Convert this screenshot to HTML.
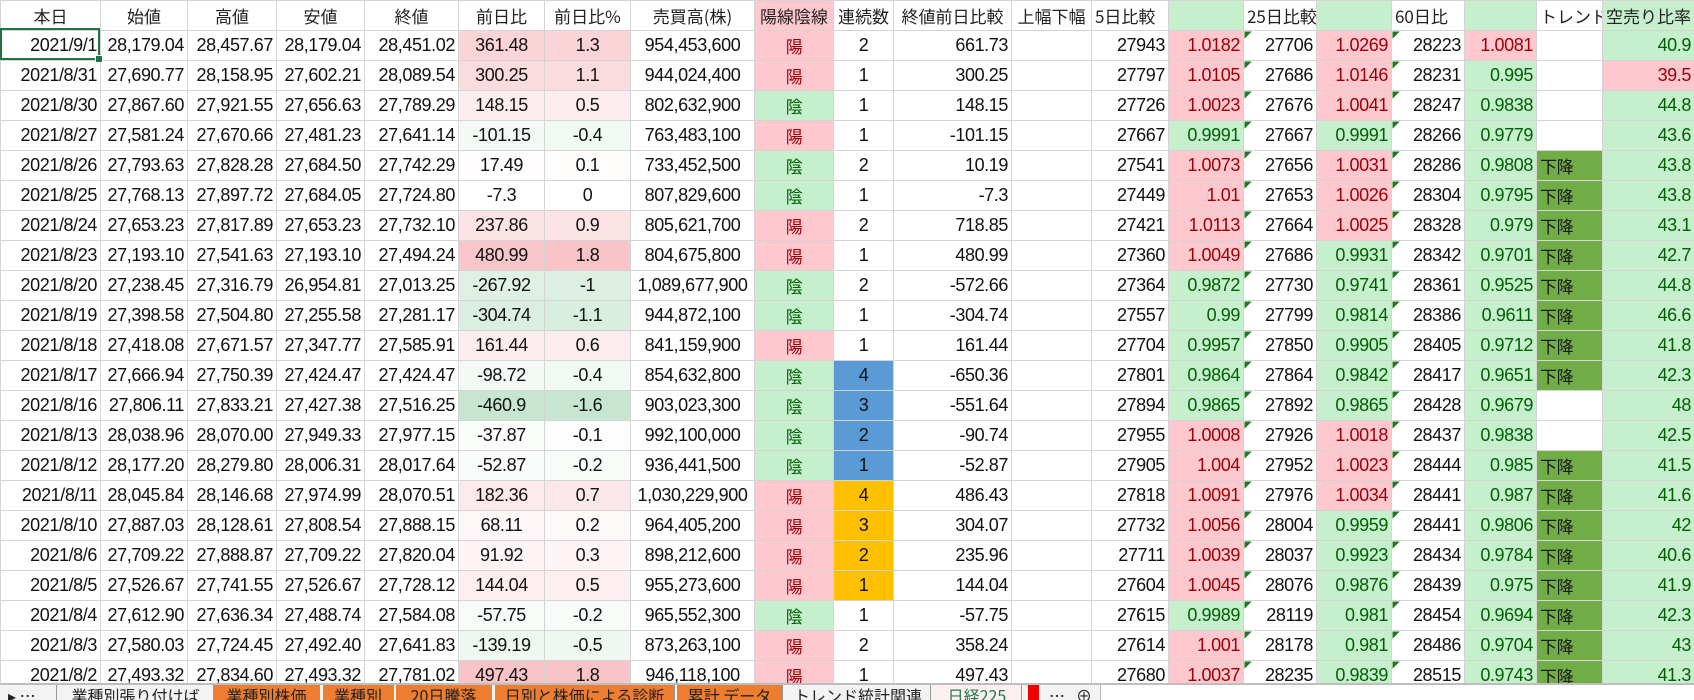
<!DOCTYPE html>
<html><head><meta charset="utf-8">
<style>
body{margin:0;width:1694px;height:698px;overflow:hidden;background:#fff;font-family:"Liberation Sans","Noto Sans CJK JP",sans-serif;position:relative}
table{border-collapse:collapse;table-layout:fixed;position:absolute;left:0;top:0;width:1694px}
td{border:1px solid #d4d4d4;padding:0 3px;font-size:18px;letter-spacing:-0.4px;color:#111;text-align:right;white-space:nowrap;overflow:hidden;height:29px;line-height:29px;box-sizing:border-box}
tr.h td{height:29px;font-family:"Noto Sans CJK JP",sans-serif;font-size:17px;letter-spacing:0;text-align:center;color:#222}
tr.h td.l{text-align:left}
td.c{text-align:center}
.j{font-family:"Noto Sans CJK JP",sans-serif;font-size:17px}
.p{background:#ffc7ce;color:#9c0006}
.g{background:#c6efce;color:#006100}
.b{background:#5b9bd5;text-align:center}
.o{background:#ffc000;text-align:center}
.t{background:#70ad47;text-align:left;font-family:"Noto Sans CJK JP",sans-serif;font-size:17px;color:#1a1a1a}
.tr{background:linear-gradient(135deg,#1e7b1e 0,#1e7b1e 5px,transparent 5px)}
#sel{position:absolute;left:0;top:28px;width:96px;height:28px;border:2px solid #217346}
#sel:after{content:"";position:absolute;right:-5px;bottom:-5px;width:6px;height:6px;background:#217346;border:1px solid #fff}
#tabs{position:absolute;left:0;top:683px;width:1694px;height:15px;background:#f3f3f3;border-top:2px solid #bdbdbd;overflow:hidden;font-family:"Noto Sans CJK JP",sans-serif;font-size:16px;line-height:20px;color:#222}
#tabs div{position:absolute;top:0;height:15px;padding-top:0;text-align:center;overflow:hidden;border-right:1px solid #999}
.or{background:#ed7d31}
</style></head><body>
<table>
<colgroup>
<col style="width:100px"><col style="width:87px"><col style="width:89px"><col style="width:88px"><col style="width:94px"><col style="width:86px"><col style="width:86px"><col style="width:124px"><col style="width:79px"><col style="width:60px"><col style="width:118px"><col style="width:80px"><col style="width:77px"><col style="width:75px"><col style="width:73px"><col style="width:75px"><col style="width:73px"><col style="width:72px"><col style="width:66px"><col style="width:92px">
</colgroup>
<tr class="h"><td>本日</td><td>始値</td><td>高値</td><td>安値</td><td>終値</td><td>前日比</td><td>前日比%</td><td>売買高(株)</td><td class="p">陽線陰線</td><td>連続数</td><td>終値前日比較</td><td>上幅下幅</td><td class="l">5日比較</td><td class="g"></td><td class="l">25日比較</td><td class="g"></td><td class="l">60日比</td><td class="g"></td><td class="l">トレンド</td><td class="l g">空売り比率</td></tr>
<tr><td>2021/9/1</td><td>28,179.04</td><td>28,457.67</td><td>28,179.04</td><td>28,451.02</td><td class="c" style="background:rgb(250,212,215)">361.48</td><td class="c" style="background:rgb(250,212,215)">1.3</td><td class="c">954,453,600</td><td class="c j p">陽</td><td class="c">2</td><td>661.73</td><td></td><td>27943</td><td class="p">1.0182</td><td class="tr">27706</td><td class="p">1.0269</td><td class="tr">28223</td><td class="p">1.0081</td><td></td><td class="g">40.9</td></tr>
<tr><td>2021/8/31</td><td>27,690.77</td><td>28,158.95</td><td>27,602.21</td><td>28,089.54</td><td class="c" style="background:rgb(251,220,222)">300.25</td><td class="c" style="background:rgb(251,220,222)">1.1</td><td class="c">944,024,400</td><td class="c j p">陽</td><td class="c">1</td><td>300.25</td><td></td><td>27797</td><td class="p">1.0105</td><td class="tr">27686</td><td class="p">1.0146</td><td class="tr">28231</td><td class="g">0.995</td><td></td><td class="p">39.5</td></tr>
<tr><td>2021/8/30</td><td>27,867.60</td><td>27,921.55</td><td>27,656.63</td><td>27,789.29</td><td class="c" style="background:rgb(253,237,238)">148.15</td><td class="c" style="background:rgb(253,237,238)">0.5</td><td class="c">802,632,900</td><td class="c j g">陰</td><td class="c">1</td><td>148.15</td><td></td><td>27726</td><td class="p">1.0023</td><td class="tr">27676</td><td class="p">1.0041</td><td class="tr">28247</td><td class="g">0.9838</td><td></td><td class="g">44.8</td></tr>
<tr><td>2021/8/27</td><td>27,581.24</td><td>27,670.66</td><td>27,481.23</td><td>27,641.14</td><td class="c" style="background:rgb(243,250,245)">-101.15</td><td class="c" style="background:rgb(241,249,243)">-0.4</td><td class="c">763,483,100</td><td class="c j p">陽</td><td class="c">1</td><td>-101.15</td><td></td><td>27667</td><td class="g">0.9991</td><td class="tr">27667</td><td class="g">0.9991</td><td class="tr">28266</td><td class="g">0.9779</td><td></td><td class="g">43.6</td></tr>
<tr><td>2021/8/26</td><td>27,793.63</td><td>27,828.28</td><td>27,684.50</td><td>27,742.29</td><td class="c" style="background:rgb(255,253,253)">17.49</td><td class="c" style="background:rgb(255,252,252)">0.1</td><td class="c">733,452,500</td><td class="c j g">陰</td><td class="c">2</td><td>10.19</td><td></td><td>27541</td><td class="p">1.0073</td><td class="tr">27656</td><td class="p">1.0031</td><td class="tr">28286</td><td class="g">0.9808</td><td class="t">下降</td><td class="g">43.8</td></tr>
<tr><td>2021/8/25</td><td>27,768.13</td><td>27,897.72</td><td>27,684.05</td><td>27,724.80</td><td class="c" style="background:rgb(254,255,254)">-7.3</td><td class="c">0</td><td class="c">807,829,600</td><td class="c j g">陰</td><td class="c">1</td><td>-7.3</td><td></td><td>27449</td><td class="p">1.01</td><td class="tr">27653</td><td class="p">1.0026</td><td class="tr">28304</td><td class="g">0.9795</td><td class="t">下降</td><td class="g">43.8</td></tr>
<tr><td>2021/8/24</td><td>27,653.23</td><td>27,817.89</td><td>27,653.23</td><td>27,732.10</td><td class="c" style="background:rgb(252,227,229)">237.86</td><td class="c" style="background:rgb(252,227,229)">0.9</td><td class="c">805,621,700</td><td class="c j p">陽</td><td class="c">2</td><td>718.85</td><td></td><td>27421</td><td class="p">1.0113</td><td class="tr">27664</td><td class="p">1.0025</td><td class="tr">28328</td><td class="g">0.979</td><td class="t">下降</td><td class="g">43.1</td></tr>
<tr><td>2021/8/23</td><td>27,193.10</td><td>27,541.63</td><td>27,193.10</td><td>27,494.24</td><td class="c" style="background:rgb(248,198,202)">480.99</td><td class="c" style="background:rgb(248,196,200)">1.8</td><td class="c">804,675,800</td><td class="c j p">陽</td><td class="c">1</td><td>480.99</td><td></td><td>27360</td><td class="p">1.0049</td><td class="tr">27686</td><td class="g">0.9931</td><td class="tr">28342</td><td class="g">0.9701</td><td class="t">下降</td><td class="g">42.7</td></tr>
<tr><td>2021/8/20</td><td>27,238.45</td><td>27,316.79</td><td>26,954.81</td><td>27,013.25</td><td class="c" style="background:rgb(223,240,228)">-267.92</td><td class="c" style="background:rgb(220,239,226)">-1</td><td class="c">1,089,677,900</td><td class="c j g">陰</td><td class="c">2</td><td>-572.66</td><td></td><td>27364</td><td class="g">0.9872</td><td class="tr">27730</td><td class="g">0.9741</td><td class="tr">28361</td><td class="g">0.9525</td><td class="t">下降</td><td class="g">44.8</td></tr>
<tr><td>2021/8/19</td><td>27,398.58</td><td>27,504.80</td><td>27,255.58</td><td>27,281.17</td><td class="c" style="background:rgb(218,239,225)">-304.74</td><td class="c" style="background:rgb(216,238,223)">-1.1</td><td class="c">944,872,100</td><td class="c j g">陰</td><td class="c">1</td><td>-304.74</td><td></td><td>27557</td><td class="g">0.99</td><td class="tr">27799</td><td class="g">0.9814</td><td class="tr">28386</td><td class="g">0.9611</td><td class="t">下降</td><td class="g">46.6</td></tr>
<tr><td>2021/8/18</td><td>27,418.08</td><td>27,671.57</td><td>27,347.77</td><td>27,585.91</td><td class="c" style="background:rgb(253,236,237)">161.44</td><td class="c" style="background:rgb(253,236,237)">0.6</td><td class="c">841,159,900</td><td class="c j p">陽</td><td class="c">1</td><td>161.44</td><td></td><td>27704</td><td class="g">0.9957</td><td class="tr">27850</td><td class="g">0.9905</td><td class="tr">28405</td><td class="g">0.9712</td><td class="t">下降</td><td class="g">41.8</td></tr>
<tr><td>2021/8/17</td><td>27,666.94</td><td>27,750.39</td><td>27,424.47</td><td>27,424.47</td><td class="c" style="background:rgb(243,250,245)">-98.72</td><td class="c" style="background:rgb(241,249,243)">-0.4</td><td class="c">854,632,800</td><td class="c j g">陰</td><td class="b">4</td><td>-650.36</td><td></td><td>27801</td><td class="g">0.9864</td><td class="tr">27864</td><td class="g">0.9842</td><td class="tr">28417</td><td class="g">0.9651</td><td class="t">下降</td><td class="g">42.3</td></tr>
<tr><td>2021/8/16</td><td>27,806.11</td><td>27,833.21</td><td>27,427.38</td><td>27,516.25</td><td class="c" style="background:rgb(199,230,209)">-460.9</td><td class="c" style="background:rgb(199,230,209)">-1.6</td><td class="c">903,023,300</td><td class="c j g">陰</td><td class="b">3</td><td>-551.64</td><td></td><td>27894</td><td class="g">0.9865</td><td class="tr">27892</td><td class="g">0.9865</td><td class="tr">28428</td><td class="g">0.9679</td><td></td><td class="g">48</td></tr>
<tr><td>2021/8/13</td><td>28,038.96</td><td>28,070.00</td><td>27,949.33</td><td>27,977.15</td><td class="c" style="background:rgb(251,253,251)">-37.87</td><td class="c" style="background:rgb(252,253,252)">-0.1</td><td class="c">992,100,000</td><td class="c j g">陰</td><td class="b">2</td><td>-90.74</td><td></td><td>27955</td><td class="p">1.0008</td><td class="tr">27926</td><td class="p">1.0018</td><td class="tr">28437</td><td class="g">0.9838</td><td></td><td class="g">42.5</td></tr>
<tr><td>2021/8/12</td><td>28,177.20</td><td>28,279.80</td><td>28,006.31</td><td>28,017.64</td><td class="c" style="background:rgb(249,252,250)">-52.87</td><td class="c" style="background:rgb(248,252,249)">-0.2</td><td class="c">936,441,500</td><td class="c j g">陰</td><td class="b">1</td><td>-52.87</td><td></td><td>27905</td><td class="p">1.004</td><td class="tr">27952</td><td class="p">1.0023</td><td class="tr">28444</td><td class="g">0.985</td><td class="t">下降</td><td class="g">41.5</td></tr>
<tr><td>2021/8/11</td><td>28,045.84</td><td>28,146.68</td><td>27,974.99</td><td>28,070.51</td><td class="c" style="background:rgb(252,233,235)">182.36</td><td class="c" style="background:rgb(252,232,234)">0.7</td><td class="c">1,030,229,900</td><td class="c j p">陽</td><td class="o">4</td><td>486.43</td><td></td><td>27818</td><td class="p">1.0091</td><td class="tr">27976</td><td class="p">1.0034</td><td class="tr">28441</td><td class="g">0.987</td><td class="t">下降</td><td class="g">41.6</td></tr>
<tr><td>2021/8/10</td><td>27,887.03</td><td>28,128.61</td><td>27,808.54</td><td>27,888.15</td><td class="c" style="background:rgb(254,247,247)">68.11</td><td class="c" style="background:rgb(254,249,249)">0.2</td><td class="c">964,405,200</td><td class="c j p">陽</td><td class="o">3</td><td>304.07</td><td></td><td>27732</td><td class="p">1.0056</td><td class="tr">28004</td><td class="g">0.9959</td><td class="tr">28441</td><td class="g">0.9806</td><td class="t">下降</td><td class="g">42</td></tr>
<tr><td>2021/8/6</td><td>27,709.22</td><td>27,888.87</td><td>27,709.22</td><td>27,820.04</td><td class="c" style="background:rgb(254,244,245)">91.92</td><td class="c" style="background:rgb(254,244,245)">0.3</td><td class="c">898,212,600</td><td class="c j p">陽</td><td class="o">2</td><td>235.96</td><td></td><td>27711</td><td class="p">1.0039</td><td class="tr">28037</td><td class="g">0.9923</td><td class="tr">28434</td><td class="g">0.9784</td><td class="t">下降</td><td class="g">40.6</td></tr>
<tr><td>2021/8/5</td><td>27,526.67</td><td>27,741.55</td><td>27,526.67</td><td>27,728.12</td><td class="c" style="background:rgb(253,238,239)">144.04</td><td class="c" style="background:rgb(253,238,239)">0.5</td><td class="c">955,273,600</td><td class="c j p">陽</td><td class="o">1</td><td>144.04</td><td></td><td>27604</td><td class="p">1.0045</td><td class="tr">28076</td><td class="g">0.9876</td><td class="tr">28439</td><td class="g">0.975</td><td class="t">下降</td><td class="g">41.9</td></tr>
<tr><td>2021/8/4</td><td>27,612.90</td><td>27,636.34</td><td>27,488.74</td><td>27,584.08</td><td class="c" style="background:rgb(248,252,249)">-57.75</td><td class="c" style="background:rgb(248,252,249)">-0.2</td><td class="c">965,552,300</td><td class="c j g">陰</td><td class="c">1</td><td>-57.75</td><td></td><td>27615</td><td class="g">0.9989</td><td class="tr">28119</td><td class="g">0.981</td><td class="tr">28454</td><td class="g">0.9694</td><td class="t">下降</td><td class="g">42.3</td></tr>
<tr><td>2021/8/3</td><td>27,580.03</td><td>27,724.45</td><td>27,492.40</td><td>27,641.83</td><td class="c" style="background:rgb(238,248,241)">-139.19</td><td class="c" style="background:rgb(238,248,241)">-0.5</td><td class="c">873,263,100</td><td class="c j p">陽</td><td class="c">2</td><td>358.24</td><td></td><td>27614</td><td class="p">1.001</td><td class="tr">28178</td><td class="g">0.981</td><td class="tr">28486</td><td class="g">0.9704</td><td class="t">下降</td><td class="g">43</td></tr>
<tr><td>2021/8/2</td><td>27,493.32</td><td>27,834.60</td><td>27,493.32</td><td>27,781.02</td><td class="c" style="background:rgb(248,196,200)">497.43</td><td class="c" style="background:rgb(248,196,200)">1.8</td><td class="c">946,118,100</td><td class="c j p">陽</td><td class="c">1</td><td>497.43</td><td></td><td>27680</td><td class="p">1.0037</td><td class="tr">28235</td><td class="g">0.9839</td><td class="tr">28515</td><td class="g">0.9743</td><td class="t">下降</td><td class="g">41.3</td></tr>
</table>
<div id="sel"></div>
<div id="tabs">
<div style="left:0;width:57px;border-right:1px solid #999;text-align:left;padding-left:8px;box-sizing:border-box">▸ …</div>
<div style="left:58px;width:155px">業種別張り付けば</div>
<div class="or" style="left:214px;width:105px">業種別株価</div>
<div class="or" style="left:323px;width:70px">業種別</div>
<div class="or" style="left:396px;width:95px">20日騰落</div>
<div class="or" style="left:495px;width:179px">日別と株価による診断</div>
<div class="or" style="left:677px;width:105px">累計 データ</div>
<div style="left:786px;width:144px">トレンド統計関連</div>
<div style="left:933px;width:88px;background:#fdeff0;color:#1e7b45">日経225</div>
<div style="left:1028px;width:11px;background:#e00;border:none"></div>
<div style="left:1042px;width:30px;border:none">…</div>
<div style="left:1074px;width:20px;border:none">⊕</div>
<div style="left:1100px;width:594px;border:none;background:#fff;border-left:1px solid #bbb"></div>
</div>
</body></html>
